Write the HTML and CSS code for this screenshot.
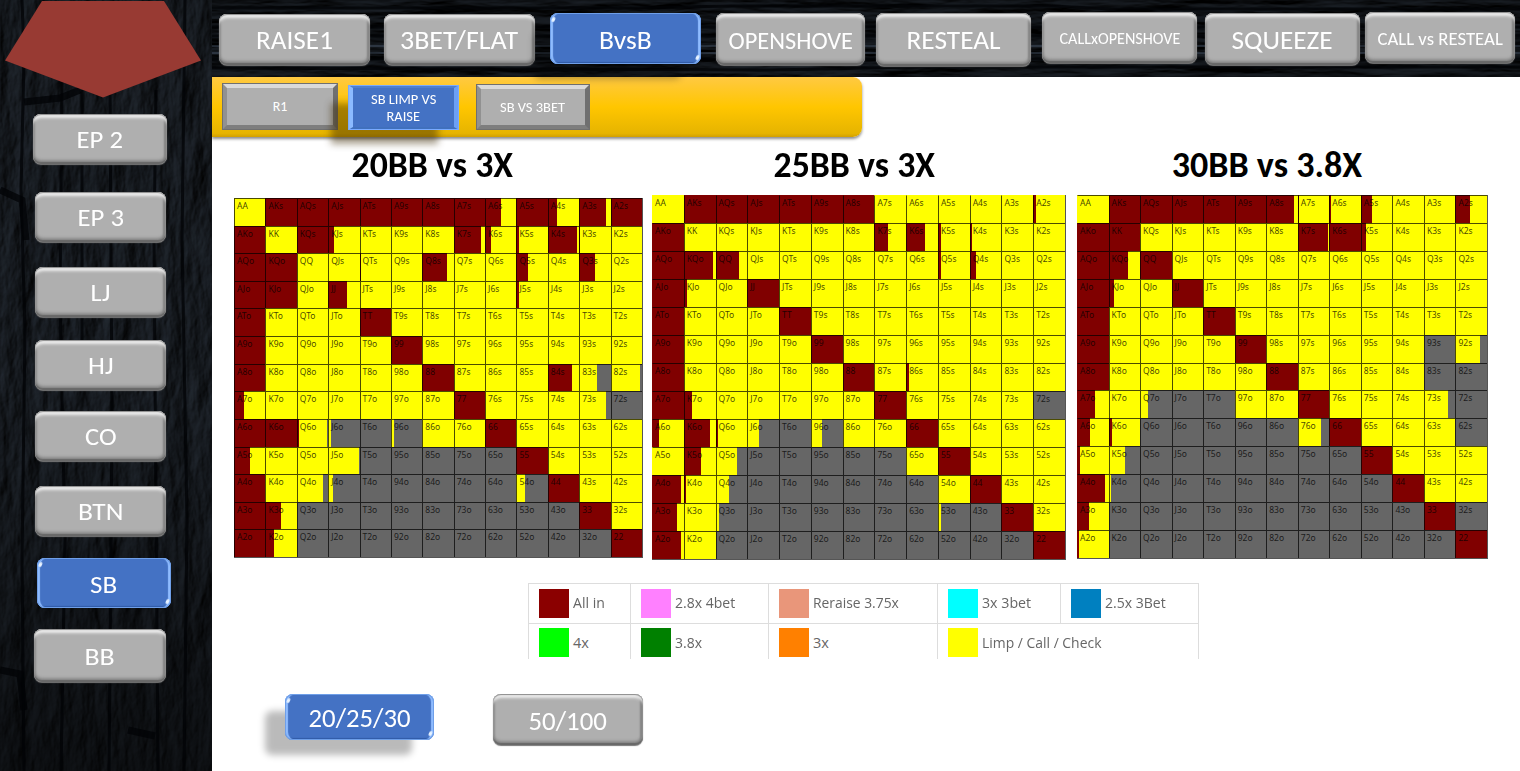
FILE: index.html
```html
<!DOCTYPE html>
<html lang="en">
<head>
<meta charset="utf-8">
<title>BvsB – SB limp vs raise</title>
<link rel="stylesheet" href="styles.css">
</head>
<body>
<div class="app">
  <aside class="sidebar">
    <svg class="texture" width="212" height="771" aria-hidden="true">
      <filter id="woodV" x="0" y="0" width="100%" height="100%" color-interpolation-filters="sRGB">
        <feTurbulence type="fractalNoise" baseFrequency="0.045 0.016" numOctaves="6" seed="11" result="n"/>
        <feDiffuseLighting in="n" surfaceScale="4" diffuseConstant="0.95" lighting-color="#2a323c"><feDistantLight azimuth="215" elevation="34"/></feDiffuseLighting>
      </filter>
      <linearGradient id="shadeV" x1="0" y1="0" x2="0" y2="1">
        <stop offset="0" stop-opacity=".1"/><stop offset=".5" stop-opacity=".05"/><stop offset="1" stop-opacity=".5"/>
      </linearGradient>
      <rect width="212" height="771" filter="url(#woodV)"/>
      <rect width="212" height="771" fill="url(#shadeV)"/>
      <g class="cracks">
        <path d="M22 0L24 60L21 190L25 330L22 560L24 771M62 80L60 300L65 540L61 771M82 90V350M110 90L112 420L109 771M156 90L154 240L158 771M185 0L182 240L187 520L184 771"/>
        <path class="wide" d="M0 190L22 200L26 240M24 102L60 98L80 90M0 670L20 674L24 710M128 730L155 736"/>
      </g>
    </svg>
    <svg class="pentagon" width="212" height="98" viewBox="0 0 212 98" aria-hidden="true"><path d="M42 1H164L201 60.500L103 97.500L5 60.500Z"/></svg>
    <nav class="positions">
      <button class="btn ep2"><span data-fit="46">EP 2</span></button>
      <button class="btn ep3"><span data-fit="46">EP 3</span></button>
      <button class="btn lj"><span data-fit="20">LJ</span></button>
      <button class="btn hj"><span data-fit="26">HJ</span></button>
      <button class="btn co"><span data-fit="32">CO</span></button>
      <button class="btn btnpos"><span data-fit="45">BTN</span></button>
      <button class="btn active sb"><span data-fit="27">SB</span></button>
      <button class="btn bb"><span data-fit="30">BB</span></button>
    </nav>
  </aside>

  <main class="main">
    <header class="topbar">
      <svg class="texture" width="1308" height="77" aria-hidden="true">
        <filter id="woodH" x="0" y="0" width="100%" height="100%" color-interpolation-filters="sRGB">
          <feTurbulence type="fractalNoise" baseFrequency="0.01 0.07" numOctaves="5" seed="5" result="n"/>
          <feDiffuseLighting in="n" surfaceScale="5" diffuseConstant="0.65" lighting-color="#28303a"><feDistantLight azimuth="260" elevation="32"/></feDiffuseLighting>
        </filter>
        <rect width="1308" height="77" filter="url(#woodH)"/>
        <g class="cracks"><path d="M0 8H420L520 6H840L900 9H1308M0 27H1308M0 36H1308M0 59H1308M0 68L560 70L700 67H1308"/></g>
        <path class="glint" d="M0 46H1308M0 53H1308"/>
      </svg>
      <button class="btn raise1"><span data-fit="77">RAISE1</span></button>
      <button class="btn threebet"><span data-fit="118">3BET/FLAT</span></button>
      <button class="btn active bvsb"><span data-fit="53">BvsB</span></button>
      <button class="btn openshove"><span data-fit="125">OPENSHOVE</span></button>
      <button class="btn resteal"><span data-fit="94">RESTEAL</span></button>
      <button class="btn callopen"><span data-fit="121">CALLxOPENSHOVE</span></button>
      <button class="btn squeeze"><span data-fit="101">SQUEEZE</span></button>
      <button class="btn callresteal"><span data-fit="125">CALL vs RESTEAL</span></button>
    </header>

    <nav class="subnav">
      <button class="tab r1"><span data-fit="15">R1</span></button>
      <button class="tab active limp"><span data-fit="65">SB LIMP VS</span><span data-fit="34">RAISE</span></button>
      <button class="tab vs3bet"><span data-fit="65">SB VS 3BET</span></button>
    </nav>

    <section class="charts">
      <article class="chart chart-20">
        <h2><span data-fit="162">20BB vs 3X</span></h2>
        <div class="range" data-range="r20"></div>
      </article>
      <article class="chart chart-25">
        <h2><span data-fit="162">25BB vs 3X</span></h2>
        <div class="range" data-range="r25"></div>
      </article>
      <article class="chart chart-30">
        <h2><span data-fit="190">30BB vs 3.8X</span></h2>
        <div class="range" data-range="r30"></div>
      </article>
    </section>

    <section class="legend">
      <div class="item"><i class="allin"></i><span data-fit="32">All in</span></div>
      <div class="item"><i class="bet28"></i><span data-fit="60">2.8x 4bet</span></div>
      <div class="item"><i class="reraise"></i><span data-fit="86">Reraise 3.75x</span></div>
      <div class="item"><i class="bet3"></i><span data-fit="49">3x 3bet</span></div>
      <div class="item"><i class="bet25"></i><span data-fit="61">2.5x 3Bet</span></div>
      <div class="item"><i class="x4"></i><span data-fit="16">4x</span></div>
      <div class="item"><i class="x38"></i><span data-fit="27">3.8x</span></div>
      <div class="item"><i class="x3"></i><span data-fit="16">3x</span></div>
      <div class="item span2"><i class="limpcall"></i><span data-fit="119">Limp / Call / Check</span></div>
    </section>

    <footer class="stacks">
      <button class="btn active s20"><span data-fit="102">20/25/30</span></button>
      <button class="btn s50"><span data-fit="78">50/100</span></button>
    </footer>
  </main>
</div>
<script src="app.js"></script>
</body>
</html>
```
FILE: styles.css
```css
* { box-sizing: border-box; }
body { margin: 0; background: #fff; font-family: Carlito, Lato, sans-serif; overflow: hidden; }
button { border: 0; padding: 0; margin: 0; font-family: inherit; color: #fff; }
[data-fit] { display: inline-block; white-space: nowrap; }

.app { display: flex; width: 1520px; height: 771px; }
.sidebar { position: relative; flex: none; width: 212px; height: 771px; background: #0b0f14; overflow: hidden; }
.main { flex: none; width: 1308px; display: flex; flex-direction: column; }
.texture { position: absolute; left: 0; top: 0; z-index: 0; }
.cracks path { fill: none; stroke: #020305; stroke-width: 3; opacity: .75; }
.cracks .wide { stroke-width: 7; }
.glint { fill: none; stroke: #53637a; stroke-width: 2; opacity: .35; }
.pentagon { position: relative; display: block; fill: #983a33; }

/* bevelled buttons */
.btn {
  position: relative; flex: none; display: flex; align-items: center; justify-content: center;
  padding-top: 1px; border-radius: 8px; background: #afafaf; font-size: 25px; line-height: 1;
  box-shadow: inset 0 1px 1px #8b8b8b, inset 0 5px 3px -1px #ececec, inset 0 -2px 1px #686868,
    inset 0 -5px 3px -1px #888, inset 2px 0 2px #8a8a8a, inset -3px 0 2px #808080, 0 1px 1px #777;
}
.btn.active {
  padding-top: 3px; background: #4472c4;
  box-shadow: inset 0 0 0 1px #6f9fe8, inset 4px 0 1px -1px #8fbcff, inset -4px 0 1px -1px #8fbcff, inset 0 -2px 1px #315ba8;
}
.btn.active::before, .btn.active::after {
  content: ""; position: absolute; width: 3px; height: 5px; border-radius: 2px; background: #e8f3ff; filter: blur(.5px);
}
.btn.active::before { left: 2px; top: 4px; transform: rotate(25deg); }
.btn.active::after { right: 2px; bottom: 4px; transform: rotate(25deg); }

.positions { position: relative; display: flex; flex-direction: column; padding-top: 16px; }
.positions .btn { width: 131px; height: 50px; margin-left: 35px; }
.positions .ep2 { width: 134px; margin-left: 33px; }
.positions .ep3 { margin-top: 28px; }
.positions .lj { margin-top: 25px; }
.positions .hj { margin-top: 23px; }
.positions .co { margin-top: 21px; }
.positions .btnpos { margin-top: 25px; }
.positions .sb { width: 134px; margin: 22px 0 0 37px; }
.positions .bb { width: 132px; height: 53px; margin: 21px 0 0 34px; }

.topbar { position: relative; z-index: 2; flex: none; display: flex; align-items: flex-start; height: 77px; padding: 14px 0 0 7px; background: #0b0f14; }
.topbar .btn { width: 151px; height: 51px; padding-top: 2px; font-size: 26.500px; }
.topbar .threebet { margin-left: 14px; }
.topbar .bvsb {
  margin: -1px 0 0 15px; padding-top: 3px;
  box-shadow: inset 0 0 0 1px #6f9fe8, inset 4px 0 1px -1px #8fbcff, inset -4px 0 1px -1px #8fbcff, inset 0 -2px 1px #315ba8, -18px 17px 7px -2px rgba(0,0,0,.28);
}
.topbar .openshove { width: 149px; height: 52px; margin: -1px 0 0 15px; font-size: 25px; }
.topbar .resteal { width: 155px; height: 53px; margin: -1px 0 0 11px; padding-top: 1px; }
.topbar .callopen { width: 155px; margin: -2px 0 0 11px; font-size: 16px; }
.topbar .squeeze { width: 155px; height: 52px; margin: -1px 0 0 8px; }
.topbar .callresteal { width: 150px; margin: -2px 0 0 5px; padding-top: 3px; font-size: 18px; }

.subnav {
  position: relative; z-index: 1; flex: none; display: flex; align-items: flex-start; width: 650px; height: 60px; padding: 6px 0 0 10px;
  border-radius: 0 9px 9px 0; background: linear-gradient(#ffc942 0, #ffc600 50%, #e6b400 94%, #d1a000 100%);
  box-shadow: 0 2px 3px rgba(0,0,0,.45);
}
.tab {
  flex: none; display: flex; flex-direction: column; align-items: center; justify-content: center;
  width: 116px; height: 47px; font-size: 14px; line-height: 17px; background: #afafaf;
  border: 5px solid; border-color: #dadada #707070 #7e7e7e #919191; outline: 1px solid #707070; outline-offset: -1px;
}
.tab.limp {
  width: 111px; height: 45px; margin: 2px 0 0 10px; background: #4472c4; outline-color: #79aaff;
  border-color: #4e7fce #6ca0f4 #4070bd #8bbaff; border-width: 3px 5px; box-shadow: -19px 16px 7px -2px rgba(60,40,0,.45);
}
.tab.vs3bet { width: 114px; height: 46px; margin: 1px 0 0 17px; }

.charts { flex: none; display: flex; height: 446px; padding-left: 22px; }
.chart { flex: none; }
.chart h2 { margin: 0; height: 58px; padding-top: 7px; font-size: 36px; line-height: 42px; font-weight: 700; color: #000; text-align: center; }
.chart-20 { width: 410px; --w: 409px; --h: 360px; }
.chart-20 h2 { padding-right: 14px; height: 61px; }
.chart-25 { width: 415px; margin-left: 8px; --w: 414px; --h: 365px; }
.chart-25 h2 { padding-right: 11px; }
.chart-30 { width: 411px; margin-left: 10px; --w: 411px; --h: 364px; }
.chart-30 h2 { padding-right: 31px; }
.range {
  display: grid; grid-template-columns: repeat(13, 1fr); grid-template-rows: repeat(13, 1fr);
  width: var(--w); height: var(--h); border: solid #555; border-width: 0 1px 1px 0;
}
.cell {
  min-width: 0; min-height: 0; padding: 1px 0 0 2px; border: solid rgba(0,0,0,.7); border-width: 1px 0 0 1px;
  background-origin: border-box; font: 8.500px/11px "Noto Sans", sans-serif; color: rgba(0,0,0,.75); overflow: hidden;
}
.chart-25 .cell:nth-child(13n+1), .chart-30 .cell:nth-child(13n+1) { border-left-color: transparent; }
.chart-25 .cell:nth-child(-n+13) { border-top-color: transparent; }

.legend {
  flex: none; align-self: flex-start; display: grid; grid-template-columns: 102px 138px 169px 123px 138px; grid-template-rows: 39px 36px;
  margin-left: 316px; width: 671px; border-top: 1px solid #ddd; border-right: 1px solid #ddd;
}
.item { display: flex; align-items: flex-start; padding: 5px 0 0 10px; border-left: 1px solid #ddd; font: 14.500px/27px "Open Sans", sans-serif; color: #666; }
.item:nth-child(n+6) { box-shadow: inset 0 1px #ddd; line-height: 29px; }
.span2 { grid-column: span 2; }
.item i { flex: none; width: 30px; height: 29px; margin-right: 4px; }
.allin { background: #8b0000; }
.bet28 { background: #ff80ff; }
.reraise { background: #e9967a; }
.bet3 { background: #0ff; }
.bet25 { background: #0080c0; }
.x4 { background: #0f0; }
.x38 { background: #008000; }
.x3 { background: #ff8000; }
.limpcall { background: #ff0; }

.stacks { display: flex; align-items: flex-start; padding: 35px 0 0 73px; }
.stacks .btn { font-size: 26.500px; }
.stacks .s20 {
  width: 149px; height: 46px; padding-top: 3px;
  box-shadow: inset 0 0 0 1px #6f9fe8, inset 4px 0 1px -1px #8fbcff, inset -4px 0 1px -1px #8fbcff, inset 0 -2px 1px #315ba8, -21px 16px 7px -1px rgba(0,0,0,.27);
}
.stacks .s50 { width: 150px; height: 51px; margin-left: 59px; padding-top: 3px; }
```
FILE: app.js
```js
const RANKS = 'AKQJT98765432';
const COLORS = { R: '#800000', Y: '#ffff00', G: '#666666' };

// One row per line. "R50Y" = all-in for the first 50% of the cell, then limp.
// A number after each letter closes that colour, so "R7Y97G" has three bands.
const RANGES = {
  r20: `Y R R R R R R R R52Y R R30Y R84Y R
R Y R R19Y Y Y Y R88Y R20Y R9Y R92Y R3Y Y
R R Y Y R3Y Y R78Y Y Y R36Y Y R50Y Y
R R Y R60Y Y Y Y Y Y R9Y Y Y Y
R Y Y Y R Y Y Y Y Y Y Y Y
R Y Y Y Y R Y Y Y Y Y Y Y
R Y Y Y Y Y R Y Y Y R78Y Y57G Y95G
R33Y Y Y Y Y Y Y R Y Y Y Y83G G
R R R7Y97G Y10G G Y10G Y Y R Y Y Y Y
R52Y Y Y Y98G G G G G G R Y Y Y
R Y Y85G Y15G G G G G G Y27G R Y Y
R R49Y G G G G G G G G G R Y
R R29Y G G G G G G G G G G R`,
  r25: `Y R R R R R R Y Y Y Y Y R10Y
R Y Y Y Y Y Y R44Y R60Y R10Y R6Y Y Y
R R92Y R74Y Y Y Y Y Y Y R9Y R20Y Y Y
R R8Y Y R Y Y Y Y Y Y Y Y Y
R Y Y Y R Y Y Y Y Y Y Y Y
R Y Y Y Y R Y Y Y Y Y Y Y
R Y Y Y Y Y R Y R8Y Y Y Y Y
R R25Y Y Y Y Y Y R Y Y Y Y G
R21Y R80Y R5Y Y36G G Y33G Y Y R Y Y Y Y
Y R52Y Y68G G G G G G Y R Y Y Y
R90Y R5Y Y42G G G G G G G Y R Y Y
R77Y Y Y10G G G G G G G Y8G G R Y
R91Y Y G G G G G G G G G G R`,
  r30: `Y R R R R R R88Y R3Y R7Y R36Y Y Y R48Y
R R Y Y Y Y Y R97Y R R15Y Y Y Y
R R61Y R Y Y Y Y Y Y Y Y Y Y
R R17Y Y R Y Y Y Y Y Y Y Y Y
R Y Y Y R Y Y Y Y Y Y Y Y
R Y Y Y Y R Y Y Y Y Y G Y79G
R Y Y Y Y Y R Y Y Y Y G G
R56Y Y Y24G G G Y Y R Y Y Y Y78G G
R41Y R9Y G G G G G Y73G R Y Y Y G
R10Y Y51G G G G G G G G R Y Y Y
R88Y Y6G G G G G G G G G R Y Y
R37Y G G G G G G G G G G R G
R7Y G G G G G G G G G G G R`
};

function paint(code) {
  const parts = code.match(/[RYG]|\d+/g);
  const stops = [];
  let from = 0;
  for (let i = 0; i < parts.length; i += 2) {
    const to = parts[i + 1] ? Number(parts[i + 1]) : 100;
    stops.push(`${COLORS[parts[i]]} ${from}% ${to}%`);
    from = to;
  }
  return `linear-gradient(90deg, ${stops.join(', ')})`;
}

function handName(r, c) {
  if (r === c) return RANKS[r] + RANKS[c];
  return r < c ? RANKS[r] + RANKS[c] + 's' : RANKS[c] + RANKS[r] + 'o';
}

document.querySelectorAll('[data-range]').forEach((el) => {
  RANGES[el.dataset.range].split('\n').forEach((row, r) => {
    row.split(' ').forEach((code, c) => {
      const cell = document.createElement('div');
      cell.className = 'cell';
      cell.textContent = handName(r, c);
      cell.style.backgroundImage = paint(code);
      el.appendChild(cell);
    });
  });
});

// Condense or widen each label to its set width.
document.querySelectorAll('[data-fit]').forEach((el) => {
  const natural = el.offsetWidth;
  const target = Number(el.dataset.fit);
  const inLegend = el.closest('.legend');
  el.style.transformOrigin = inLegend ? 'left center' : 'center';
  el.style.transform = `scaleX(${target / natural})`;
});
```
